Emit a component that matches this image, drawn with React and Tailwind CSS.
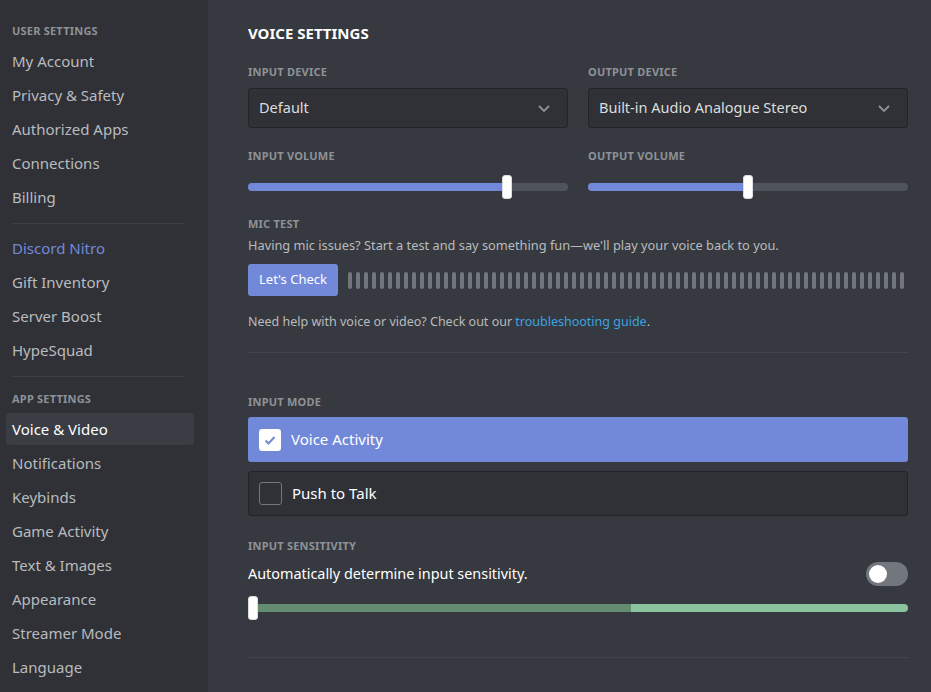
import React from "react";

const font = { fontFamily: '"Noto Sans", "Open Sans", sans-serif' };

function NavItem({ children, active, nitro }) {
  return (
    <div
      className={`h-[32px] mb-[2px] ml-[6px] mr-[14px] px-[6px] flex items-center rounded-[4px] text-[15px] ${
        active ? "bg-[#3a3d44] text-white" : nitro ? "text-[#7289da]" : "text-[#b9bbbe]"
      }`}
    >
      {children}
    </div>
  );
}

function Header({ children }) {
  return (
    <div className="px-[12px] h-[28px] flex items-end pb-[6px] text-[11px] font-bold text-[#8e9297] tracking-[0.02em]">
      {children}
    </div>
  );
}

function Label({ children, className = "" }) {
  return (
    <div className={`text-[11px] font-bold text-[#8e9297] tracking-[0.02em] ${className}`}>{children}</div>
  );
}

function Select({ value }) {
  return (
    <div className="h-[40px] rounded-[3px] bg-[#2f3136] border border-[#222428] flex items-center justify-between pl-[10px] pr-[16px] text-[14.5px] text-[#dcddde]">
      <span>{value}</span>
      <svg width="14" height="10" viewBox="0 0 14 10" fill="none">
        <path d="M2 3l5 5 5-5" stroke="#8e9297" strokeWidth="1.8" />
      </svg>
    </div>
  );
}

function Slider({ pct }) {
  return (
    <div className="relative h-[24px] flex items-center">
      <div className="w-full h-[8px] rounded-full bg-[#4f545c] overflow-hidden">
        <div className="h-full bg-[#7289da]" style={{ width: `${pct}%` }} />
      </div>
      <div
        className="absolute top-0 w-[10px] h-[24px] rounded-[3px] bg-white border border-[#dcddde]"
        style={{ left: `calc(${pct}% - 5px)` }}
      />
    </div>
  );
}

export default function App() {
  const bars = Array.from({ length: 70 });
  return (
    <div style={font} className="w-[931px] h-[692px] flex overflow-hidden bg-[#36393f]">
      <div className="w-[208px] shrink-0 bg-[#2f3136] pt-[17px]">
        <Header>USER SETTINGS</Header>
        <NavItem>My Account</NavItem>
        <NavItem>Privacy &amp; Safety</NavItem>
        <NavItem>Authorized Apps</NavItem>
        <NavItem>Connections</NavItem>
        <NavItem>Billing</NavItem>
        <div className="ml-[12px] mr-[24px] mt-[10px] mb-[8px] h-px bg-[#3b3e44]" />
        <NavItem nitro>Discord Nitro</NavItem>
        <NavItem>Gift Inventory</NavItem>
        <NavItem>Server Boost</NavItem>
        <NavItem>HypeSquad</NavItem>
        <div className="ml-[12px] mr-[24px] mt-[10px] mb-[8px] h-px bg-[#3b3e44]" />
        <Header>APP SETTINGS</Header>
        <NavItem active>Voice &amp; Video</NavItem>
        <NavItem>Notifications</NavItem>
        <NavItem>Keybinds</NavItem>
        <NavItem>Game Activity</NavItem>
        <NavItem>Text &amp; Images</NavItem>
        <NavItem>Appearance</NavItem>
        <NavItem>Streamer Mode</NavItem>
        <NavItem>Language</NavItem>
      </div>

      <div className="flex-1 pl-[40px] pr-[23px] pt-[22px]">
        <div className="text-[15px] font-bold text-white leading-[22px]">VOICE SETTINGS</div>

        <div className="grid grid-cols-2 gap-x-[20px] mt-[20px]">
          <div>
            <Label className="h-[16px] leading-[16px]">INPUT DEVICE</Label>
            <div className="mt-[8px]">
              <Select value="Default" />
            </div>
            <Label className="mt-[20px] h-[16px] leading-[16px]">INPUT VOLUME</Label>
            <div className="mt-[11px]">
              <Slider pct={81} />
            </div>
          </div>
          <div>
            <Label className="h-[16px] leading-[16px]">OUTPUT DEVICE</Label>
            <div className="mt-[8px]">
              <Select value="Built-in Audio Analogue Stereo" />
            </div>
            <Label className="mt-[20px] h-[16px] leading-[16px]">OUTPUT VOLUME</Label>
            <div className="mt-[11px]">
              <Slider pct={50} />
            </div>
          </div>
        </div>

        <Label className="mt-[17px] h-[16px] leading-[16px]">MIC TEST</Label>
        <div className="mt-[4px] text-[12.8px] text-[#b9bbbe] leading-[18px]">
          Having mic issues? Start a test and say something fun—we'll play your voice back to you.
        </div>
        <div className="mt-[10px] flex items-center">
          <div className="w-[90px] h-[32px] rounded-[3px] bg-[#7289da] text-white text-[13px] flex items-center justify-center">
            Let's Check
          </div>
          <div className="flex-1 ml-[10px] flex gap-[4px] overflow-hidden h-[17px]">
            {bars.map((_, i) => (
              <div key={i} className="w-[4px] h-[17px] rounded-full bg-[#72767d] shrink-0" />
            ))}
          </div>
        </div>
        <div className="mt-[17px] text-[12.5px] text-[#b9bbbe] leading-[18px]">
          Need help with voice or video? Check out our{" "}
          <span className="text-[#3ba4e0]">troubleshooting guide</span>.
        </div>
        <div className="mt-[21px] h-px bg-[#42454a]" />

        <Label className="mt-[41px] h-[16px] leading-[16px]">INPUT MODE</Label>
        <div className="mt-[7px] h-[45px] rounded-[3px] bg-[#7289da] flex items-center px-[11px]">
          <div className="w-[22px] h-[22px] rounded-[3px] bg-white flex items-center justify-center">
            <svg width="14" height="14" viewBox="0 0 14 14" fill="none">
              <path d="M2.5 7.5l3 3 6-6.5" stroke="#7289da" strokeWidth="2" />
            </svg>
          </div>
          <span className="ml-[10px] text-[15px] text-white">Voice Activity</span>
        </div>
        <div className="mt-[9px] h-[45px] rounded-[3px] bg-[#2f3136] border border-[#222428] flex items-center px-[10px]">
          <div className="w-[23px] h-[23px] rounded-[3px] border border-[#72767d]" />
          <span className="ml-[10px] text-[15px] text-white">Push to Talk</span>
        </div>

        <Label className="mt-[22px] h-[16px] leading-[16px]">INPUT SENSITIVITY</Label>
        <div className="mt-[8px] flex items-center justify-between">
          <span className="text-[14.4px] text-white leading-[24px]">Automatically determine input sensitivity.</span>
          <div className="w-[42px] h-[24px] rounded-full bg-[#72767d] flex items-center pl-[3px]">
            <div className="w-[18px] h-[18px] rounded-full bg-white" />
          </div>
        </div>
        <div className="relative mt-[10px] h-[24px] flex items-center">
          <div className="w-full h-[8px] rounded-full overflow-hidden flex">
            <div className="w-[58%] h-full bg-[#658b71]" />
            <div className="flex-1 h-full bg-[#8bc49e]" />
          </div>
          <div className="absolute left-0 top-0 w-[10px] h-[24px] rounded-[3px] bg-white border border-[#dcddde]" />
        </div>
        <div className="mt-[37px] h-px bg-[#42454a]" />
      </div>
    </div>
  );
}
